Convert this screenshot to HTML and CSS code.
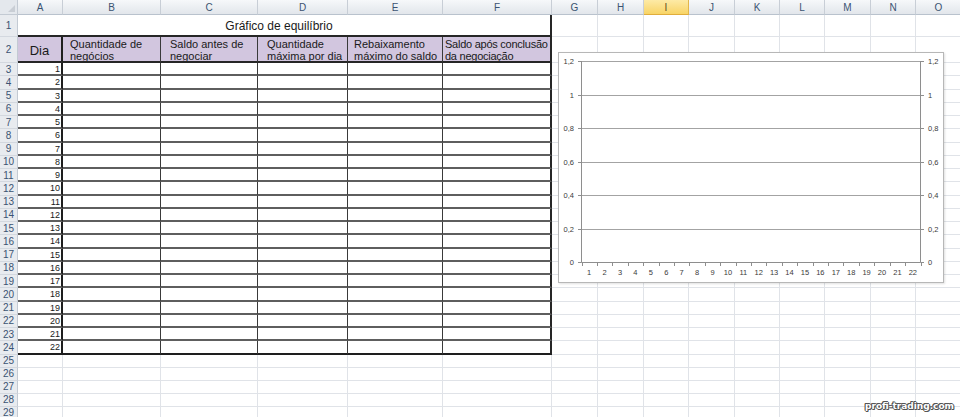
FILE: index.html
```html
<html>

<head>
    <title>Gráfico de equilíbrio</title>
    <link rel="stylesheet" href="styles.css">
</head>

<body>
	<div class="sheet" id="sheet">
		<div class="corner"></div>
		<div class="ch">A</div>
		<div class="ch">B</div>
		<div class="ch">C</div>
		<div class="ch">D</div>
		<div class="ch">E</div>
		<div class="ch">F</div>
		<div class="ch">G</div>
		<div class="ch">H</div>
		<div class="ch sel">I</div>
		<div class="ch">J</div>
		<div class="ch">K</div>
		<div class="ch">L</div>
		<div class="ch">M</div>
		<div class="ch">N</div>
		<div class="ch">O</div>

		<div class="rh">1</div>
		<div class="title">Gráfico de equilíbrio</div>
		<div class="c"></div><div class="c"></div><div class="c"></div>
		<div class="c"></div><div class="c"></div><div class="c"></div>
		<div class="c"></div><div class="c"></div><div class="c"></div>

		<div class="rh">2</div>
		<div class="hd dia">Dia</div>
		<div class="hd pad7">Quantidade de<br>negócios</div>
		<div class="hd pad9">Saldo antes de<br>negociar</div>
		<div class="hd pad9">Quantidade<br>máxima por dia</div>
		<div class="hd pad6">Rebaixamento<br>máximo do saldo</div>
		<div class="hd end">Saldo após conclusão<br>da negociação</div>
		<div class="c"></div><div class="c"></div><div class="c"></div>
		<div class="c"></div><div class="c"></div><div class="c"></div>
		<div class="c"></div><div class="c"></div><div class="c"></div>
	</div>

	<div class="chart">
		<svg width="384" height="229" viewBox="0 0 384 229">
			<g class="grid">
				<line x1="22.5" y1="8.5" x2="361.5" y2="8.5"/>
				<line x1="22.5" y1="42.5" x2="361.5" y2="42.5"/>
				<line x1="22.5" y1="75.5" x2="361.5" y2="75.5"/>
				<line x1="22.5" y1="109.5" x2="361.5" y2="109.5"/>
				<line x1="22.5" y1="142.5" x2="361.5" y2="142.5"/>
				<line x1="22.5" y1="176.5" x2="361.5" y2="176.5"/>
			</g>
			<g class="axis" id="axis">
				<line x1="22.5" y1="8" x2="22.5" y2="209.5"/>
				<line x1="361.5" y1="8" x2="361.5" y2="209.5"/>
				<line x1="22.5" y1="209.5" x2="361.5" y2="209.5"/>
			</g>
			<g class="ylab left">
				<text x="15" y="11">1,2</text>
				<text x="15" y="45">1</text>
				<text x="15" y="78">0,8</text>
				<text x="15" y="112">0,6</text>
				<text x="15" y="145">0,4</text>
				<text x="15" y="179">0,2</text>
				<text x="15" y="212">0</text>
			</g>
			<g class="ylab right">
				<text x="369" y="11">1,2</text>
				<text x="369" y="45">1</text>
				<text x="369" y="78">0,8</text>
				<text x="369" y="112">0,6</text>
				<text x="369" y="145">0,4</text>
				<text x="369" y="179">0,2</text>
				<text x="369" y="212">0</text>
			</g>
			<g class="xlab" id="xlab"></g>
		</svg>
	</div>

	<div class="mark">profi-trading.com</div>

	<script type='text/javascript' src="script.js"></script>
</body>

</html>
```

FILE: styles.css
```css
html, body {
	margin: 0;
	overflow: hidden;
}

body {
	font-family: "Liberation Sans", Arial, sans-serif;
	background-color: white;
	color: #1a1a1a;
	position: relative;
	height: 417px;
}

.sheet {
	display: grid;
	grid-template-columns: 18px 45px 98px 97px 90px 95px 109px 46px 46px 45px 46px 45px 45px 46px 45px 46px;
	grid-template-rows: 15px 22px 26px repeat(22, 13.25px) repeat(5, 13px);
	width: 962px;
}

.sheet > div {
	box-sizing: border-box;
	overflow: hidden;
}

.corner {
	background: #e4e8ed;
	border-right: 1px solid #c3cad3;
	border-bottom: 1px solid #c3cad3;
	position: relative;
}

.corner:after {
	content: "";
	position: absolute;
	right: 2px;
	bottom: 2px;
	border-left: 7px solid transparent;
	border-bottom: 7px solid #c9ced5;
}

.ch {
	background: linear-gradient(#f6f8fa, #e2e6eb);
	border-right: 1px solid #c8ced6;
	border-bottom: 1px solid #b9c2cd;
	color: #3b5372;
	font-size: 10px;
	display: flex;
	align-items: center;
	justify-content: center;
}

.ch.sel {
	background: linear-gradient(#fdeaa6, #f8d466);
	border-right: 1px solid #e2b64a;
	border-bottom: 1px solid #e0ad3c;
	color: #5a4a1c;
}

.rh {
	background: #e8ebef;
	border-right: 1px solid #c3cad3;
	border-bottom: 1px solid #d3d8df;
	color: #3b5372;
	font-size: 10px;
	display: flex;
	align-items: center;
	justify-content: center;
}

.c {
	border-right: 1px solid #e0e3e8;
	border-bottom: 1px solid #e0e3e8;
}

.title {
	grid-column: span 6;
	border-right: 2px solid #262626;
	border-bottom: 2px solid #262626;
	font-size: 12px;
	display: flex;
	align-items: center;
	justify-content: center;
	padding: 2px 10px 0 0;
}

.hd {
	background-color: #d2c6df;
	border-right: 1px solid #3a3a3a;
	border-bottom: 2px solid #262626;
	font-size: 11px;
	line-height: 12px;
	padding: 1px 0 0 2px;
	white-space: nowrap;
}

.hd.pad6 { padding-left: 6px; }
.hd.pad7 { padding-left: 7px; }
.hd.pad9 { padding-left: 9px; }

.hd.dia {
	border-right: 2px solid #1e1e1e;
	font-size: 13px;
	display: flex;
	align-items: center;
	justify-content: center;
	padding: 3px 0 0 0;
}

.hd.end {
	letter-spacing: -0.25px;
}

.hd.end, .d.end {
	border-right: 2px solid #262626;
}

.d {
	border-right: 1px solid #3a3a3a;
	border-bottom: 2px solid #5e5e5e;
}

.d.num {
	border-right: 2px solid #1e1e1e;
	font-size: 9px;
	text-align: right;
	padding-right: 1px;
	line-height: 12px;
}

.d.bottom {
	border-bottom: 2px solid #1e1e1e;
}

.chart {
	position: absolute;
	left: 558px;
	top: 52px;
	width: 386px;
	height: 231px;
	box-sizing: border-box;
	border: 1px solid #b7b7b7;
	background-color: white;
	box-shadow: 1px 1px 2px rgba(0, 0, 0, 0.12);
}

.chart svg {
	display: block;
}

.grid line {
	stroke: #a3a3a3;
	stroke-width: 1;
}

.axis line {
	stroke: #8e8e8e;
	stroke-width: 1;
}

.ylab text, .xlab text {
	font-family: "Liberation Sans", Arial, sans-serif;
	font-size: 7.5px;
	fill: #3a3a3a;
}

.ylab.left text {
	text-anchor: end;
}

.xlab text {
	text-anchor: middle;
}

.mark {
	position: absolute;
	right: 6px;
	bottom: 6px;
	font-family: "DejaVu Sans", sans-serif;
	font-weight: 700;
	font-size: 9px;
	color: white;
	text-shadow: 1px 0 0 #555, -1px 0 0 #555, 0 1px 0 #555, 0 -1px 0 #555, 1px 1px 0 #555, -1px -1px 0 #555;
}
```

FILE: script.js
```js
var sheet = document.getElementById('sheet');

// rows 3..29, the table runs down to row 24
for (var r = 3; r <= 29; r++) {
	var html = '<div class="rh">' + r + '</div>';
	for (var c = 0; c < 15; c++) {
		var cls = 'c';
		var txt = '';
		if (r <= 24 && c < 6) {
			cls += ' d';
			if (c == 0) { cls += ' num'; txt = r - 2; }
			if (c == 5) cls += ' end';
			if (r == 24) cls += ' bottom';
		}
		html += '<div class="' + cls + '">' + txt + '</div>';
	}
	sheet.insertAdjacentHTML('beforeend', html);
}

// chart ticks and day labels
var axis = document.getElementById('axis');
var xlab = document.getElementById('xlab');
var ns = 'http://www.w3.org/2000/svg';
var left = 22.5, step = 339 / 22;
var ys = [8.5, 42.5, 75.5, 109.5, 142.5, 176.5, 209.5];

function line(x1, y1, x2, y2) {
	var l = document.createElementNS(ns, 'line');
	l.setAttribute('x1', x1);
	l.setAttribute('y1', y1);
	l.setAttribute('x2', x2);
	l.setAttribute('y2', y2);
	axis.appendChild(l);
}

for (var i = 0; i < ys.length; i++) {
	line(19, ys[i], 22.5, ys[i]);
	line(361.5, ys[i], 365, ys[i]);
}

for (var d = 0; d <= 22; d++) {
	var x = Math.round(left + d * step) + 0.5;
	line(x, 209.5, x, 213);
	if (d < 22) {
		var t = document.createElementNS(ns, 'text');
		t.setAttribute('x', (left + (d + 0.5) * step).toFixed(1));
		t.setAttribute('y', 222);
		t.textContent = d + 1;
		xlab.appendChild(t);
	}
}
```
